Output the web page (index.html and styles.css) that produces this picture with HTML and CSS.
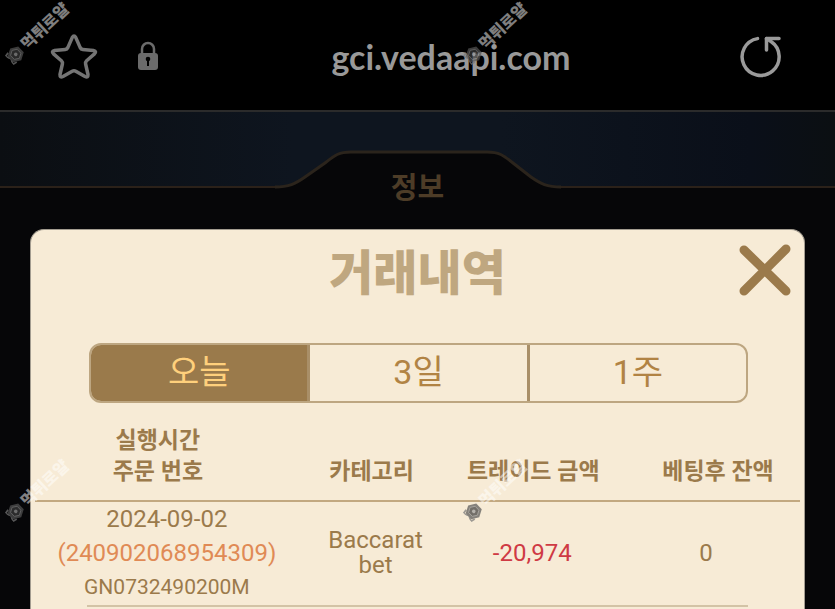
FILE: index.html
```html
<!DOCTYPE html>
<html lang="ko">
<head>
  <meta charset="UTF-8">
  <meta name="viewport" content="width=device-width, initial-scale=1.0">
  <title>거래내역</title>
  <link rel="stylesheet" href="styles.css">
</head>
<body>

<!-- Browser bar -->
<header class="browser-bar">
  <button class="icon-button" type="button" aria-label="북마크">
    <svg width="48" height="48" viewBox="0 0 48 48" fill="none" stroke="#747474" stroke-width="3.500" stroke-linejoin="round">
      <path d="M22.300 5.400Q24 2.400 25.700 5.400L30.200 15.600Q31 17.200 32.800 17.400L43.500 18.500Q47 19.200 44.500 21.900L36.600 28.800Q35.200 30.200 35.600 32L38 42.500Q38.200 46 35 44.500L25.800 39.200Q24 38.200 22.200 39.200L13 44.500Q9.800 46 10 42.500L12.400 32Q12.800 30.200 11.400 28.800L3.500 21.900Q1 19.200 4.500 18.500L15.200 17.400Q17 17.200 17.800 15.600Z"/>
    </svg>
  </button>
  <svg class="lock" width="22" height="30" viewBox="0 0 22 30">
    <path d="M5 13V8a6 6 0 0 1 12 0v5" fill="none" stroke="#6b6b6b" stroke-width="2.500"/>
    <rect x="1" y="12" width="20" height="17" rx="3" fill="#6b6b6b"/>
    <circle cx="11" cy="18" r="2.300" fill="#000"/>
    <rect x="10" y="18" width="2" height="7" fill="#000"/>
  </svg>
  <input class="address" type="text" aria-label="주소" value="gci.vedaapi.com" readonly>
  <button class="icon-button" type="button" aria-label="새로고침">
    <svg width="44" height="44" viewBox="0 0 44 44" fill="none" stroke="#9a9a9a" stroke-width="3.500" stroke-linecap="round" stroke-linejoin="round">
      <path d="M18.500 4.600A18.500 18.500 0 1 0 32 7.500L27.500 4.600"/>
      <path d="M27.500 16V4.600H40"/>
    </svg>
  </button>
</header>

<!-- Dimmed page behind the popup -->
<div class="top-band">
  <div class="band-line"></div>
  <svg class="band-tab" width="286" height="40" viewBox="0 0 286 40">
    <path d="M0 37C14 37 20 34 30 27L50 13C60 5 64 2 76 2H212C224 2 228 5 238 13L256 27C266 34 272 37 286 37V40H0Z" fill="#060608"/>
    <path d="M0 37C14 37 20 34 30 27L50 13C60 5 64 2 76 2H212C224 2 228 5 238 13L256 27C266 34 272 37 286 37" fill="none" stroke="#2b241c" stroke-width="3"/>
  </svg>
  <div class="band-line"></div>
</div>
<h2 class="page-name">정보</h2>

<main class="popup">
  <div class="popup-head">
    <h1>거래내역</h1>
    <button class="close" type="button" aria-label="닫기">
      <svg width="54" height="54" viewBox="0 0 54 54" stroke="#9b7a4b" stroke-width="9" stroke-linecap="round">
        <path d="M6 7L48 48M48 6L6 48"/>
      </svg>
    </button>
  </div>

  <div class="tabs">
    <button class="tab active" type="button">오늘</button>
    <button class="tab" type="button">3일</button>
    <button class="tab" type="button">1주</button>
  </div>

  <table class="history">
    <thead>
      <tr>
        <th class="col-order">실행시간<br>주문 번호</th>
        <th class="col-category">카테고리</th>
        <th class="col-amount">트레이드 금액</th>
        <th class="col-balance">베팅후 잔액</th>
      </tr>
    </thead>
    <tbody>
      <tr>
        <td class="order">
          <div>2024-09-02</div>
          <div class="order-number">(240902068954309)</div>
          <div class="game-number">GN0732490200M</div>
        </td>
        <td class="category">Baccarat bet</td>
        <td class="minus">-20,974</td>
        <td class="balance">0</td>
      </tr>
    </tbody>
  </table>
  <hr class="row-line">
</main>

<!-- Watermarks -->
<svg width="0" height="0" class="symbols">
  <symbol id="badge" viewBox="0 0 20 20">
    <path d="M3 10L0 4l5-1M3 10l-3 6 5 1" fill="none" stroke="#777" stroke-width="2"/>
    <path d="M10 1l8 4.500v9L10 19l-8-4.500v-9z" fill="#555"/>
    <path d="M10 4l5 3v6l-5 3-5-3V7z" fill="#3c3c3c" stroke="#888"/>
    <circle cx="10" cy="10" r="2" fill="#999"/>
  </symbol>
</svg>
<div class="watermarks">
  <div class="mark mark-1"><svg class="badge"><use href="#badge"/></svg><span>먹튀로얄</span></div>
  <div class="mark mark-2"><svg class="badge"><use href="#badge"/></svg><span>먹튀로얄</span></div>
  <div class="mark mark-3"><svg class="badge"><use href="#badge"/></svg><span>먹튀로얄</span></div>
  <div class="mark mark-4"><svg class="badge"><use href="#badge"/></svg><span>먹튀로얄</span></div>
</div>

</body>
</html>
```
FILE: styles.css
```css
* {
  box-sizing: border-box;
}

body {
  display: flex;
  flex-direction: column;
  min-height: 100vh;
  margin: 0;
  background-color: #060608;
  color: #9b7a4b;
  font-family: Roboto, "Noto Sans CJK KR", sans-serif;
}

button {
  padding: 0;
  border: none;
  background: none;
  font-family: inherit;
  cursor: pointer;
}

svg {
  display: block;
}

/* Browser bar */
.browser-bar {
  display: flex;
  align-items: center;
  height: 112px;
  padding: 2px 52px 0 50px;
  background-color: #000;
  border-bottom: 2px solid #2b2b2b;
}

.lock {
  margin-left: 39px;
}

.address {
  flex: 1;
  min-width: 0;
  height: 48px;
  margin: 0 0 0 2px;
  padding: 0 0 0 2px;
  border: none;
  outline: none;
  background: none;
  color: #999;
  font-family: Lato, sans-serif;
  font-size: 34px;
  font-weight: bold;
  text-align: center;
}

/* Dimmed page */
.top-band {
  display: flex;
  align-items: flex-end;
  height: 78px;
  background: linear-gradient(to right, #0b0e12, #0e151f 35%, #0e151f 60%, #0a0f19 90%, #0b0f12);
}

.band-line {
  flex: 1;
  height: 4px;
  background-color: #060608;
  border-top: 2px solid #2b2119;
}

.page-name {
  margin: -20px 0 23px;
  color: #4d3c27;
  font-size: 29px;
  line-height: 36px;
  text-align: center;
}

/* Popup */
.popup {
  flex: 1;
  margin: 0 30px;
  background-color: #f7ebd6;
  border: 1px solid #a39c90;
  border-bottom: none;
  border-radius: 14px 14px 0 0;
}

.popup-head {
  display: grid;
  grid-template-columns: 1fr auto 1fr;
  align-items: center;
  height: 80px;
  padding: 0 12px;
}

.popup-head h1 {
  grid-column: 2;
  margin: 0;
  padding-top: 8px;
  color: #bfa780;
  font-size: 48px;
  font-weight: 900;
  line-height: 56px;
}

.close {
  justify-self: end;
}

.tabs {
  display: flex;
  height: 60px;
  margin: 33px 56px 0 58px;
  border: 2px solid #bda681;
  border-radius: 12px;
  overflow: hidden;
}

.tab {
  flex: 1;
  padding-bottom: 7px;
  color: #b18344;
  font-size: 34px;
}

.tab + .tab {
  border-left: 3px solid #a98f68;
}

.tab.active {
  background-color: #9a7a4b;
  color: #ffd07c;
}

.history {
  width: calc(100% - 8px);
  margin: 22px 4px 0;
  border-collapse: collapse;
  table-layout: fixed;
  font-size: 24px;
  line-height: 25px;
  text-align: center;
}

.history th {
  padding: 0 0 13px;
  border-bottom: 2px solid #c2a880;
  font-size: 23px;
  line-height: 31px;
  vertical-align: bottom;
}

.history td {
  padding: 0;
}

.col-order {
  width: 35%;
}

.col-category {
  width: 18%;
}

.col-amount {
  width: 24%;
}

.history .col-order {
  padding-right: 22px;
}

.history .col-amount {
  padding-left: 2px;
}

.history .col-balance {
  padding-left: 12px;
}

.history .balance {
  padding-right: 12px;
}

.history .order {
  padding-right: 4px;
  line-height: 34px;
}

.history .category {
  padding: 0 10px 0 18px;
}

.order-number {
  color: #e08a55;
}

.game-number {
  font-size: 21px;
}

.minus {
  color: #cf3a44;
}

.row-line {
  height: 2px;
  margin: 1px 56px 0;
  border: none;
  background-color: #d3c3a6;
}

/* Watermarks */
.symbols {
  position: absolute;
}

.watermarks {
  pointer-events: none;
}

.mark {
  position: absolute;
  display: flex;
  align-items: center;
  gap: 2px;
  color: rgba(255, 255, 255, 0.5);
  font-size: 16px;
  font-weight: 900;
  line-height: 20px;
  white-space: nowrap;
  transform: rotate(-43deg);
  transform-origin: 8px 10px;
}

.badge {
  width: 18px;
  height: 18px;
  opacity: 0.7;
}

.mark-1 {
  top: 45px;
  left: 7px;
}

.mark-2 {
  top: 45px;
  left: 465px;
}

.mark-3 {
  top: 502px;
  left: 7px;
}

.mark-4 {
  top: 502px;
  left: 465px;
}
```
